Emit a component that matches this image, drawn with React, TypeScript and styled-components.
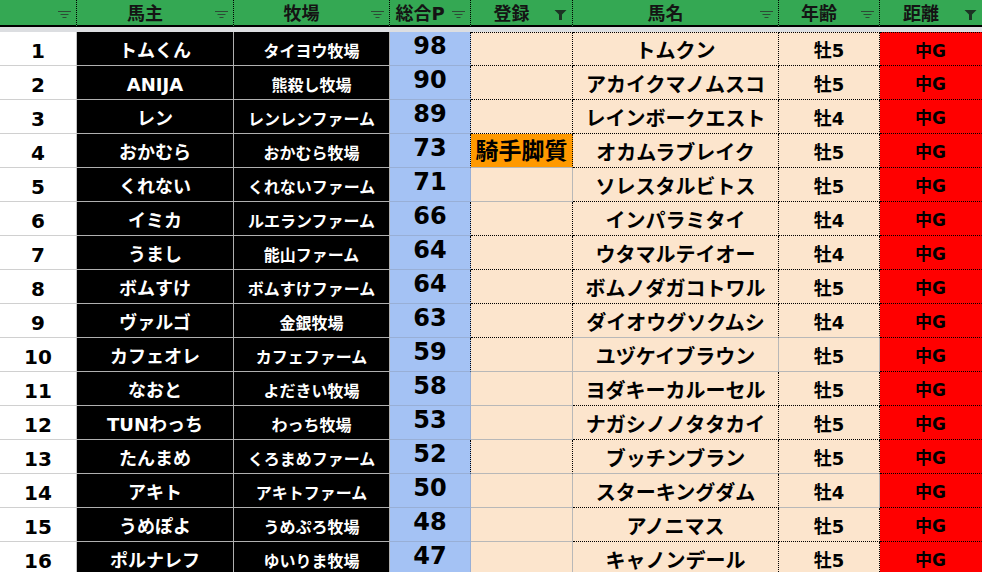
import styled, { createGlobalStyle } from "styled-components";

type Line = "dot" | "gray" | "blue" | "none";

interface CellProps {
  $r?: Line;
  $b?: Line;
  $t?: Line;
}

const GlobalStyle = createGlobalStyle`
  html, body {
    margin: 0;
    padding: 0;
    background: #ffffff;
    overflow: hidden;
  }
  body {
    font-family: "DejaVu Sans", "Noto Sans CJK JP", sans-serif;
  }
`;

const line = (l?: Line) => {
  switch (l) {
    case "dot":
      return "1px dotted #000";
    case "gray":
      return "1px solid #b8b8b8";
    case "blue":
      return "1px solid #98afd6";
    default:
      return "1px solid transparent";
  }
};

const Sheet = styled.div`
  display: grid;
  grid-template-columns: 77px 157px 156px 81px 102px 206px 101px 102px;
  grid-template-rows: 27px 5px;
  grid-auto-rows: 34px;
  width: 982px;
  height: 572px;
  overflow: hidden;
`;

const HeaderCell = styled.div<{ $last?: boolean }>`
  position: relative;
  display: flex;
  align-items: center;
  justify-content: center;
  box-sizing: border-box;
  padding: 3px 20px 0 0;
  background: #34a853;
  border-bottom: 2px solid #000;
  border-right: ${(p) => (p.$last ? "none" : "1px dotted #000")};
  font-family: "DejaVu Sans", "Noto Sans CJK JP", sans-serif;
  font-weight: 700;
  font-size: 18px;
  line-height: 1;
  color: #141414;
`;

const IconSlot = styled.span`
  position: absolute;
  right: 5px;
  top: 10px;
  width: 13px;
  height: 10px;
  display: flex;
`;

const FreezeBand = styled.div`
  grid-column: 1 / -1;
  background: #dcdee1;
`;

const Cell = styled.div<CellProps>`
  display: flex;
  align-items: center;
  justify-content: center;
  box-sizing: border-box;
  padding-top: 4px;
  white-space: nowrap;
  overflow: hidden;
  font-weight: 700;
  line-height: 1;
  border-right: ${(p) => line(p.$r)};
  border-bottom: ${(p) => line(p.$b)};
  border-top: ${(p) => (p.$t ? line(p.$t) : "none")};
`;

const NumCell = styled(Cell)`
  background: #ffffff;
  color: #000;
  font-size: 20px;
  border-right: 1px solid #c4c4c4;
  border-bottom: 1px solid #d0d0d0;
`;

const OwnerCell = styled(Cell)`
  background: #000;
  color: #fff;
  font-size: 18px;
  border-right: 1px solid #b0b0b0;
  border-bottom: 1px solid #b0b0b0;
`;

const FarmCell = styled(Cell)`
  background: #000;
  color: #fff;
  font-size: 16px;
  padding-top: 7px;
  border-right: 1px solid #b0b0b0;
  border-bottom: 1px solid #b0b0b0;
`;

const PointCell = styled(Cell)`
  background: #a4c2f4;
  color: #000;
  font-size: 24px;
  padding-top: 0;
  padding-bottom: 5px;
`;

const EntryCell = styled(Cell)<{ $tag?: boolean }>`
  background: ${(p) => (p.$tag ? "#ff9900" : "#fce5cd")};
  color: #000;
  font-size: 23px;
  padding-top: 2px;
`;

const NameCell = styled(Cell)`
  background: #fce5cd;
  color: #000;
  font-size: 20px;
`;

const AgeCell = styled(Cell)`
  background: #fce5cd;
  color: #000;
  font-size: 18px;
`;

const DistCell = styled(Cell)`
  background: #ff0000;
  color: #000;
  font-size: 17px;
`;

const SortIcon = () => (
  <svg width="13" height="10" viewBox="0 0 13 10">
    <g fill="#2d4a35">
      <rect x="0" y="1" width="13" height="1" />
      <rect x="2.5" y="4" width="8" height="1" />
      <rect x="4.5" y="7" width="4" height="1" />
    </g>
  </svg>
);

const FunnelIcon = () => (
  <svg width="13" height="10" viewBox="0 0 13 10">
    <path d="M0.5 0 H12.5 L8 4.5 V10 H5 V4.5 Z" fill="#1c3324" />
  </svg>
);

const headers = [
  { label: "", filtered: false },
  { label: "馬主", filtered: false },
  { label: "牧場", filtered: false },
  { label: "総合P", filtered: false },
  { label: "登録", filtered: true },
  { label: "馬名", filtered: false },
  { label: "年齢", filtered: false },
  { label: "距離", filtered: true },
];

interface Row {
  owner: string;
  farm: string;
  point: number;
  entry: string;
  name: string;
  age: string;
  // borders: point-right, entry(r,b), name(r,b), age(r,b)
  pr: Line;
  er: Line;
  eb: Line;
  nr: Line;
  nb: Line;
  ar: Line;
  ab: Line;
}

const rows: Row[] = [
  { owner: "トムくん", farm: "タイヨウ牧場", point: 98, entry: "", name: "トムクン", age: "牡5", pr: "dot", er: "dot", eb: "dot", nr: "dot", nb: "dot", ar: "dot", ab: "dot" },
  { owner: "ANIJA", farm: "熊殺し牧場", point: 90, entry: "", name: "アカイクマノムスコ", age: "牡5", pr: "dot", er: "dot", eb: "dot", nr: "dot", nb: "dot", ar: "dot", ab: "dot" },
  { owner: "レン", farm: "レンレンファーム", point: 89, entry: "", name: "レインボークエスト", age: "牡4", pr: "dot", er: "dot", eb: "dot", nr: "dot", nb: "dot", ar: "dot", ab: "dot" },
  { owner: "おかむら", farm: "おかむら牧場", point: 73, entry: "騎手脚質", name: "オカムラブレイク", age: "牡5", pr: "dot", er: "dot", eb: "gray", nr: "dot", nb: "dot", ar: "dot", ab: "dot" },
  { owner: "くれない", farm: "くれないファーム", point: 71, entry: "", name: "ソレスタルビトス", age: "牡5", pr: "blue", er: "gray", eb: "gray", nr: "dot", nb: "dot", ar: "dot", ab: "dot" },
  { owner: "イミカ", farm: "ルエランファーム", point: 66, entry: "", name: "インパラミタイ", age: "牡4", pr: "dot", er: "dot", eb: "dot", nr: "dot", nb: "dot", ar: "dot", ab: "dot" },
  { owner: "うまし", farm: "能山ファーム", point: 64, entry: "", name: "ウタマルテイオー", age: "牡4", pr: "dot", er: "dot", eb: "dot", nr: "dot", nb: "dot", ar: "dot", ab: "dot" },
  { owner: "ボムすけ", farm: "ボムすけファーム", point: 64, entry: "", name: "ボムノダガコトワル", age: "牡5", pr: "dot", er: "dot", eb: "dot", nr: "dot", nb: "dot", ar: "dot", ab: "dot" },
  { owner: "ヴァルゴ", farm: "金銀牧場", point: 63, entry: "", name: "ダイオウグソクムシ", age: "牡4", pr: "dot", er: "dot", eb: "dot", nr: "dot", nb: "gray", ar: "dot", ab: "gray" },
  { owner: "カフェオレ", farm: "カフェファーム", point: 59, entry: "", name: "ユヅケイブラウン", age: "牡5", pr: "dot", er: "gray", eb: "gray", nr: "gray", nb: "gray", ar: "gray", ab: "gray" },
  { owner: "なおと", farm: "よだきい牧場", point: 58, entry: "", name: "ヨダキーカルーセル", age: "牡5", pr: "blue", er: "gray", eb: "gray", nr: "dot", nb: "dot", ar: "dot", ab: "dot" },
  { owner: "TUNわっち", farm: "わっち牧場", point: 53, entry: "", name: "ナガシノノタタカイ", age: "牡5", pr: "blue", er: "gray", eb: "gray", nr: "dot", nb: "dot", ar: "dot", ab: "dot" },
  { owner: "たんまめ", farm: "くろまめファーム", point: 52, entry: "", name: "ブッチンブラン", age: "牡5", pr: "dot", er: "dot", eb: "gray", nr: "dot", nb: "gray", ar: "dot", ab: "gray" },
  { owner: "アキト", farm: "アキトファーム", point: 50, entry: "", name: "スターキングダム", age: "牡4", pr: "blue", er: "gray", eb: "gray", nr: "dot", nb: "dot", ar: "gray", ab: "gray" },
  { owner: "うめぽよ", farm: "うめぷろ牧場", point: 48, entry: "", name: "アノニマス", age: "牡5", pr: "blue", er: "gray", eb: "gray", nr: "dot", nb: "dot", ar: "dot", ab: "dot" },
  { owner: "ポルナレフ", farm: "ゆいりま牧場", point: 47, entry: "", name: "キャノンデール", age: "牡5", pr: "blue", er: "gray", eb: "gray", nr: "dot", nb: "dot", ar: "dot", ab: "dot" },
];

const App = () => {
  return (
    <>
      <GlobalStyle />
      <Sheet>
        {headers.map((h, i) => (
          <HeaderCell key={i} $last={i === headers.length - 1}>
            {h.label}
            <IconSlot>{h.filtered ? <FunnelIcon /> : <SortIcon />}</IconSlot>
          </HeaderCell>
        ))}
        <FreezeBand />
        {rows.map((r, i) => {
          const top: Line | undefined = i === 0 ? "dot" : undefined;
          return [
            <NumCell key={`n${i}`}>{i + 1}</NumCell>,
            <OwnerCell key={`o${i}`}>{r.owner}</OwnerCell>,
            <FarmCell key={`f${i}`}>{r.farm}</FarmCell>,
            <PointCell key={`p${i}`} $r={r.pr} $b="blue">
              {r.point}
            </PointCell>,
            <EntryCell key={`e${i}`} $tag={r.entry !== ""} $r={r.er} $b={r.eb} $t={top}>
              {r.entry}
            </EntryCell>,
            <NameCell key={`m${i}`} $r={r.nr} $b={r.nb} $t={top}>
              {r.name}
            </NameCell>,
            <AgeCell key={`a${i}`} $r={r.ar} $b={r.ab} $t={top}>
              {r.age}
            </AgeCell>,
            <DistCell key={`d${i}`} $r="none" $b="dot" $t={top}>
              中G
            </DistCell>,
          ];
        })}
      </Sheet>
    </>
  );
};

export default App;
